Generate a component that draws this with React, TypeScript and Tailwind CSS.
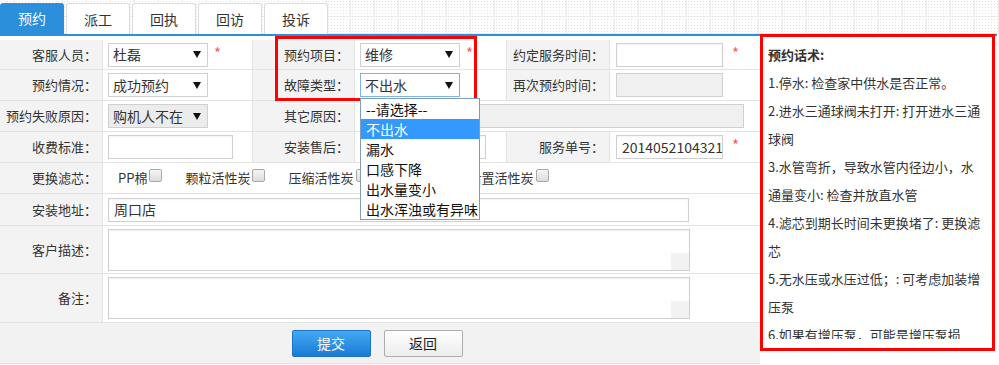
import React from "react";
import clsx from "clsx";

const Arrow = () => (
  <svg width="8" height="7" viewBox="0 0 8 7">
    <path d="M0 0h8L4 7z" fill="#111" />
  </svg>
);

const Star = ({ className }: { className?: string }) => (
  <span className={clsx("text-[15px] leading-none text-[#ff5a5a] -mt-[5px]", className)}>*</span>
);

type SelectProps = { value: string; disabled?: boolean; focused?: boolean };

const Select = ({ value, disabled, focused }: SelectProps) => (
  <div
    className={clsx(
      "w-[100px] h-[24px] border flex items-center justify-between pl-[4px] pr-[6px] text-[14px] text-[#333]",
      disabled ? "bg-[#ececec]" : "bg-white",
      focused ? "border-[#7eb4ea]" : "border-[#d0d0d0]"
    )}
  >
    <span>{value}</span>
    <Arrow />
  </div>
);

type InputProps = { width: string; value?: string; disabled?: boolean };

const Input = ({ width, value, disabled }: InputProps) => (
  <div
    className={clsx(
      width,
      "h-[24px] border border-[#d0d0d0] flex items-center pl-[5px] overflow-hidden whitespace-nowrap text-[14px] text-[#333]",
      disabled ? "bg-[#f0f0f0]" : "bg-white shadow-[inset_0_1px_2px_rgba(0,0,0,0.05)]"
    )}
  >
    {value}
  </div>
);

const Label = ({ width, children }: { width: string; children: React.ReactNode }) => (
  <div
    className={clsx(
      width,
      "h-full shrink-0 bg-[#f3f3f3] border-r border-[#e3e3e3] flex items-center justify-end pr-[5px] text-[13px] text-[#333]"
    )}
  >
    {children}
  </div>
);

const Cell = ({ width, children }: { width: string; children?: React.ReactNode }) => (
  <div className={clsx(width, "h-full flex items-center border-r border-[#e3e3e3] pl-[5px]")}>{children}</div>
);

const TextArea = () => (
  <div className="relative w-[582px] h-[42px] border border-[#d0d0d0] bg-white shadow-[inset_0_1px_2px_rgba(0,0,0,0.06)]">
    <div className="absolute right-0 bottom-0 w-[18px] h-[17px] bg-[#f2f2f2]" />
  </div>
);

const Check = ({ label }: { label: string }) => (
  <div className="flex items-center text-[13px] text-[#333]">
    <span>{label}</span>
    <span className="ml-[2px] mb-[5px] w-[13px] h-[13px] rounded-[2px] border border-[#a9a9a9] bg-[linear-gradient(#f4f4f4,#dcdcdc)]" />
  </div>
);

const tabs = ["预约", "派工", "回执", "回访", "投诉"];
const options = ["--请选择--", "不出水", "漏水", "口感下降", "出水量变小", "出水浑浊或有异味"];
const filters = ["PP棉", "颗粒活性炭", "压缩活性炭", "超滤膜", "后置活性炭"];

const script = [
  ["1.停水: 检查家中供水是否正常。"],
  ["2.进水三通球阀未打开: 打开进水三通", "球阀"],
  ["3.水管弯折，导致水管内径边小，水", "通量变小: 检查并放直水管"],
  ["4.滤芯到期长时间未更换堵了: 更换滤", "芯"],
  ["5.无水压或水压过低；: 可考虑加装增", "压泵"],
  ["6.如果有增压泵，可能是增压泵损", "坏"],
];

export default function App() {
  return (
    <div className="relative w-[999px] h-[365px] overflow-hidden bg-white text-[#333] font-['Microsoft_YaHei','Noto_Sans_CJK_SC',sans-serif]">
      {/* tab strip */}
      <div className="h-[34px] flex items-end gap-[2px] bg-[image:linear-gradient(90deg,#ebebeb_1px,transparent_1px),linear-gradient(#ebebeb_1px,transparent_1px),radial-gradient(#e2e2e2_0.8px,transparent_1px)] bg-[size:24px_17px,24px_17px,3px_3px] bg-[position:14px_16px,14px_16px,0_0]">
        {tabs.map((t, i) => (
          <div
            key={t}
            className={clsx(
              "w-[64px] h-[31px] rounded-t-[3px] flex items-center justify-center text-[14px]",
              i === 0 ? "bg-[#2b8fdb] text-white" : "bg-white border border-b-0 border-[#dcdcdc] text-[#333]"
            )}
          >
            {t}
          </div>
        ))}
      </div>
      <div className="h-[2px] w-[997px] bg-[#2b8fdb]" />

      <div className="flex">
        {/* form table */}
        <div className="w-[760px] shrink-0">
          <div className="h-[34px] pt-[4px] flex border-b border-[#e3e3e3]">
            <Label width="w-[103px]">客服人员：</Label>
            <Cell width="w-[150px]">
              <Select value="杜磊" />
              <Star className="ml-[6px]" />
            </Cell>
            <Label width="w-[102px]">预约项目：</Label>
            <Cell width="w-[152px]">
              <Select value="维修" />
              <Star className="ml-[6px]" />
            </Cell>
            <Label width="w-[103px]">约定服务时间：</Label>
            <div className="flex-1 h-full flex items-center pl-[6px]">
              <Input width="w-[107px]" />
              <Star className="ml-[9px]" />
            </div>
          </div>

          <div className="h-[31px] flex border-b border-[#e3e3e3]">
            <Label width="w-[103px]">预约情况：</Label>
            <Cell width="w-[150px]">
              <Select value="成功预约" />
            </Cell>
            <Label width="w-[102px]">故障类型：</Label>
            <Cell width="w-[152px]">
              <Select value="不出水" focused />
            </Cell>
            <Label width="w-[103px]">再次预约时间：</Label>
            <div className="flex-1 h-full flex items-center pl-[6px]">
              <Input width="w-[107px]" disabled />
            </div>
          </div>

          <div className="h-[31px] flex border-b border-[#e3e3e3]">
            <Label width="w-[103px]">预约失败原因：</Label>
            <Cell width="w-[150px]">
              <Select value="购机人不在" disabled />
            </Cell>
            <Label width="w-[102px]">其它原因：</Label>
            <div className="flex-1 h-full flex items-center pl-[5px]">
              <Input width="w-[384px]" disabled />
            </div>
          </div>

          <div className="h-[31px] flex border-b border-[#e3e3e3]">
            <Label width="w-[103px]">收费标准：</Label>
            <Cell width="w-[150px]">
              <Input width="w-[125px]" />
            </Cell>
            <Label width="w-[102px]">安装售后：</Label>
            <Cell width="w-[152px]">
              <Input width="w-[126px]" />
            </Cell>
            <Label width="w-[103px]">服务单号：</Label>
            <div className="flex-1 h-full flex items-center pl-[6px]">
              <Input width="w-[107px]" value="20140521043215" />
              <Star className="ml-[9px]" />
            </div>
          </div>

          <div className="h-[31px] flex border-b border-[#e3e3e3]">
            <Label width="w-[103px]">更换滤芯：</Label>
            <div className="flex-1 h-full flex items-center gap-[23px] pl-[15px]">
              {filters.map((f) => (
                <Check key={f} label={f} />
              ))}
            </div>
          </div>

          <div className="h-[32px] flex border-b border-[#e3e3e3]">
            <Label width="w-[103px]">安装地址：</Label>
            <div className="flex-1 h-full flex items-center pl-[5px]">
              <Input width="w-[581px]" value="周口店" />
            </div>
          </div>

          <div className="h-[48px] flex border-b border-[#e3e3e3]">
            <Label width="w-[103px]">客户描述：</Label>
            <div className="flex-1 h-full flex items-center pl-[5px]">
              <TextArea />
            </div>
          </div>

          <div className="h-[49px] flex border-b border-[#e3e3e3]">
            <Label width="w-[103px]">备注：</Label>
            <div className="flex-1 h-full flex items-center pl-[5px]">
              <TextArea />
            </div>
          </div>

          <div className="h-[41px] bg-[#f2f2f2] border-b border-[#e3e3e3] flex items-start pt-[7px] justify-center gap-[13px] pr-[6px]">
            <button className="w-[79px] h-[27px] rounded-[2px] border border-[#1a73c8] bg-[linear-gradient(#43aaf2,#1a7ad6)] text-white text-[14px]">
              提交
            </button>
            <button className="w-[79px] h-[27px] rounded-[2px] border border-[#adadad] bg-[linear-gradient(#ffffff,#ececec)] text-[#222] text-[14px]">
              返回
            </button>
          </div>
        </div>

        {/* script panel */}
        <div className="relative z-10 -mt-[2px] w-[235px] h-[317px] border-[3px] border-[#ff0000] bg-white">
          <div className="h-[302px] overflow-hidden pt-[4px] pl-[5px] text-[13px] leading-[28px] text-[#333] whitespace-nowrap">
            <div className="font-bold">预约话术:</div>
            {script.map((lines, i) => (
              <div key={i}>
                {lines.map((l) => (
                  <div key={l}>{l}</div>
                ))}
              </div>
            ))}
          </div>
        </div>
      </div>

      {/* annotation box around 预约项目 / 故障类型 */}
      <div className="absolute left-[275px] top-[36px] w-[202px] h-[65px] border-[3px] border-[#ff0000] pointer-events-none" />

      {/* open dropdown of 故障类型 */}
      <div className="absolute left-[360px] top-[98px] w-[120px] border border-[#7f9db9] bg-white text-[14px] text-[#111]">
        {options.map((o, i) => (
          <div
            key={o}
            className={clsx("h-[20px] leading-[20px] pl-[5px] whitespace-nowrap", i === 1 && "bg-[#3399ff] text-white")}
          >
            {o}
          </div>
        ))}
      </div>
    </div>
  );
}
